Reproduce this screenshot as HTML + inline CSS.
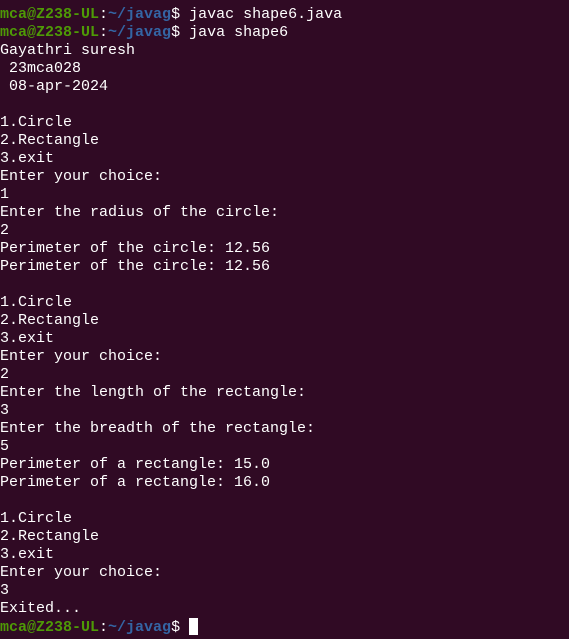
<!DOCTYPE html><html><head><style>
html,body{margin:0;padding:0;background:#300a24;width:569px;height:639px;overflow:hidden}
pre{margin:0;position:absolute;left:0;top:-12px;font-family:"Liberation Mono",monospace;font-size:15px;line-height:18px;color:#fff}
.g{color:#4e9a06;font-weight:bold}.b{color:#3465a4;font-weight:bold}
.c{display:inline-block;width:9px;height:17px;background:#fff;vertical-align:-4px}
</style></head><body><pre>3.exit
<span class="g">mca@Z238-UL</span>:<span class="b">~/javag</span>$ javac shape6.java
<span class="g">mca@Z238-UL</span>:<span class="b">~/javag</span>$ java shape6
Gayathri suresh
 23mca028
 08-apr-2024

1.Circle
2.Rectangle
3.exit
Enter your choice:
1
Enter the radius of the circle:
2
Perimeter of the circle: 12.56
Perimeter of the circle: 12.56

1.Circle
2.Rectangle
3.exit
Enter your choice:
2
Enter the length of the rectangle:
3
Enter the breadth of the rectangle:
5
Perimeter of a rectangle: 15.0
Perimeter of a rectangle: 16.0

1.Circle
2.Rectangle
3.exit
Enter your choice:
3
Exited...
<span class="g">mca@Z238-UL</span>:<span class="b">~/javag</span>$ <span class="c"></span></pre></body></html>
